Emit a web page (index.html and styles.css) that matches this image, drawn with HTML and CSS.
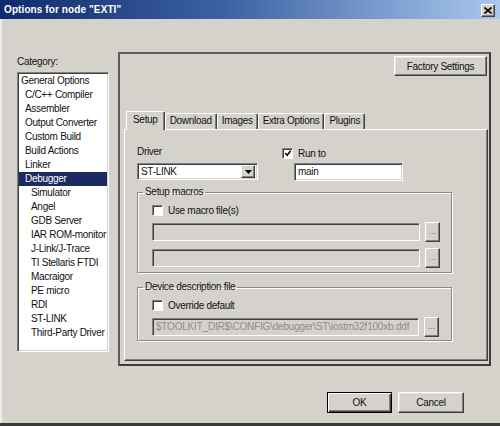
FILE: index.html
```html
<!DOCTYPE html>
<html>
<head>
<meta charset="utf-8">
<link rel="stylesheet" href="styles.css">
</head>
<body>
<div class="window">
  <div class="titlebar">
    <span class="title">Options for node "EXTI"</span>
    <span class="close"><svg width="8" height="7" viewBox="0 0 8 7"><path d="M0.5 0.5 L7.5 6.5 M7.5 0.5 L0.5 6.5" stroke="#000" stroke-width="1.6"/></svg></span>
  </div>
  <div class="body">
    <div class="category">
      <div class="cat-label">Category:</div>
      <ul class="cat-list">
        <li class="lv0">General Options</li>
        <li class="lv1">C/C++ Compiler</li>
        <li class="lv1">Assembler</li>
        <li class="lv1">Output Converter</li>
        <li class="lv1">Custom Build</li>
        <li class="lv1">Build Actions</li>
        <li class="lv1">Linker</li>
        <li class="lv1 sel">Debugger</li>
        <li class="lv2">Simulator</li>
        <li class="lv2">Angel</li>
        <li class="lv2">GDB Server</li>
        <li class="lv2">IAR ROM-monitor</li>
        <li class="lv2">J-Link/J-Trace</li>
        <li class="lv2">TI Stellaris FTDI</li>
        <li class="lv2">Macraigor</li>
        <li class="lv2">PE micro</li>
        <li class="lv2">RDI</li>
        <li class="lv2">ST-LINK</li>
        <li class="lv2">Third-Party Driver</li>
      </ul>
    </div>
    <div class="options">
      <div class="factory-row"><div class="btn factory">Factory Settings</div></div>
      <div class="tabs">
        <span class="tab active">Setup</span>
        <span class="tab">Download</span>
        <span class="tab">Images</span>
        <span class="tab">Extra Options</span>
        <span class="tab">Plugins</span>
      </div>
      <div class="tab-page">
        <div class="row1">
          <div class="driver-col">
            <div class="lbl">Driver</div>
            <div class="select"><span class="sel-text">ST-LINK</span><span class="dd"><svg width="7" height="4" viewBox="0 0 7 4"><path d="M0 0 H7 L3.5 4 Z" fill="#000"/></svg></span></div>
          </div>
          <div class="run-col">
            <div class="check"><span class="box"><svg width="9" height="9" viewBox="0 0 9 9"><path d="M1.5 4 L3.5 6.5 L7.5 1.5" stroke="#000" stroke-width="1.7" fill="none"/></svg></span><span>Run to</span></div>
            <div class="input">main</div>
          </div>
        </div>
        <fieldset class="group macros">
          <legend>Setup macros</legend>
          <div class="group-inner">
            <div class="check"><span class="box"></span><span>Use macro file(s)</span></div>
            <div class="file-row"><div class="field disabled"></div><span class="browse">...</span></div>
            <div class="file-row second"><div class="field disabled"></div><span class="browse">...</span></div>
          </div>
        </fieldset>
        <fieldset class="group device">
          <legend>Device description file</legend>
          <div class="group-inner">
            <div class="check"><span class="box"></span><span>Override default</span></div>
            <div class="file-row"><div class="field disabled path">$TOOLKIT_DIR$\CONFIG\debugger\ST\iostm32f100xb.ddf</div><span class="browse">...</span></div>
          </div>
        </fieldset>
      </div>
    </div>
  </div>
  <div class="footer">
    <div class="btn default">OK</div>
    <div class="btn">Cancel</div>
  </div>
</div>
</body>
</html>
```

FILE: styles.css
```css
* { box-sizing: border-box; }
html, body { margin: 0; padding: 0; }
body {
  font-family: "Liberation Sans", Arial, sans-serif;
  font-size: 10px;
  letter-spacing: -0.3px;
  color: #111;
  background: #d5d2cc;
}
.window {
  width: 500px;
  height: 426px;
  background: #d5d2cc;
  display: flex;
  flex-direction: column;
  border-bottom: 3px solid #3a3a3a;
  box-shadow: inset 2px 0 #eeece8;
}
.titlebar {
  height: 19px;
  flex: none;
  display: flex;
  align-items: center;
  justify-content: space-between;
  padding: 0 5px 0 4px;
  background: linear-gradient(90deg, #0f2a6c 0%, #3d62a4 45%, #a9c8ee 100%);
}
.title {
  color: #fff;
  font-weight: bold;
  font-size: 10px;
  letter-spacing: 0.1px;
}
.close {
  width: 14px;
  height: 13px;
  margin-top: 2px;
  background: #d5d2cc;
  border: 1px solid;
  border-color: #fff #404040 #404040 #fff;
  box-shadow: inset -1px -1px #808080;
  display: flex;
  align-items: center;
  justify-content: center;
}
.close svg { display: block; }
.body {
  display: grid;
  grid-template-columns: 92px 373px;
  column-gap: 9px;
  padding: 33px 0 0 17px;
  align-items: start;
}
.cat-label {
  margin-top: 4px;
  line-height: 12px;
  height: 12px;
}
.cat-list {
  list-style: none;
  margin: 4px 0 0 0;
  padding: 1px 1px 0 1px;
  height: 280px;
  background: #fff;
  border: 1px solid;
  border-color: #808080 #fff #fff #808080;
  box-shadow: inset 1px 1px #404040, inset -1px -1px #d5d2cc;
}
.cat-list li {
  height: 14px;
  line-height: 14px;
  white-space: nowrap;
}
.cat-list .lv0 { padding-left: 2px; }
.cat-list .lv1 { padding-left: 6px; }
.cat-list .lv2 { padding-left: 12px; }
.cat-list .sel { background: #1b2a62; color: #fff; }

.options {
  height: 314px;
  border: 2px solid;
  border-color: #5c5c5c #3c3c3c #3c3c3c #5c5c5c;
  padding: 2px 1px 0 4px;
  display: flex;
  flex-direction: column;
}
.factory-row {
  display: flex;
  justify-content: flex-end;
  padding-right: 1px;
}
.btn {
  height: 20px;
  display: flex;
  align-items: center;
  justify-content: center;
  border: 1px solid;
  border-color: #fff #404040 #404040 #fff;
  box-shadow: inset -1px -1px #808080, inset 1px 1px #e4e2dd;
  background: #d5d2cc;
}
.factory { width: 93px; }
.tabs {
  margin-top: 35px;
  height: 18px;
  display: flex;
  align-items: flex-end;
  padding-left: 2px;
  position: relative;
  z-index: 1;
}
.tab {
  height: 16px;
  line-height: 14px;
  padding: 0 4px;
  border: 1px solid;
  border-bottom: none;
  border-color: #fff #404040 #404040 #fff;
  box-shadow: inset -1px 0 #808080;
  border-radius: 2px 2px 0 0;
  background: #d5d2cc;
}
.tab.active {
  height: 19px;
  margin-bottom: -1px;
  padding: 1px 6px 0 6px;
}
.tab-page {
  width: 364px;
  height: 232px;
  border: 1px solid;
  border-color: #fff #404040 #404040 #fff;
  box-shadow: inset -1px -1px #808080;
  padding: 16px 0 0 12px;
}
.row1 {
  display: flex;
  height: 35px;
}
.driver-col { width: 121px; }
.lbl { line-height: 12px; height: 12px; }
.select {
  margin-top: 5px;
  height: 17px;
  background: #fff;
  border: 1px solid;
  border-color: #808080 #fff #fff #808080;
  box-shadow: inset 1px 1px #404040, inset -1px -1px #d5d2cc;
  display: flex;
  align-items: center;
  justify-content: space-between;
  padding: 0 2px 0 3px;
}
.dd {
  width: 14px;
  height: 13px;
  border: 1px solid;
  border-color: #fff #404040 #404040 #fff;
  box-shadow: inset -1px -1px #808080;
  background: #d5d2cc;
  display: flex;
  align-items: center;
  justify-content: center;
}
.dd svg { display: block; }
.run-col { margin-left: 24px; }
.check {
  display: flex;
  align-items: center;
  height: 13px;
  margin-top: 1px;
  gap: 5px;
}
.box {
  width: 11px;
  height: 11px;
  flex: none;
  background: #fff;
  border: 1px solid;
  border-color: #808080 #fff #fff #808080;
  box-shadow: inset 1px 1px #404040;
  display: flex;
  align-items: center;
  justify-content: center;
}
.box svg { display: block; margin: 0 0 0 1px; }
.input {
  margin: 3px 0 0 12px;
  width: 109px;
  height: 18px;
  background: #fff;
  border: 1px solid;
  border-color: #808080 #fff #fff #808080;
  box-shadow: inset 1px 1px #404040, inset -1px -1px #d5d2cc;
  padding: 0 3px;
  line-height: 16px;
}
fieldset.group {
  margin: 5px 0 0 0;
  padding: 0 0 4px 5px;
  width: 315px;
  border: 1px solid #8c8a86;
  box-shadow: inset 1px 1px #fff, 1px 1px #fff;
  min-inline-size: 0;
}
fieldset.group legend {
  padding: 0 2px;
  line-height: 12px;
}
.group-inner { padding-left: 9px; }
.group-inner .check { margin-top: 6px; height: 12px; }
.file-row {
  display: flex;
  align-items: center;
  gap: 5px;
  margin-top: 6px;
}
.file-row.second { margin-top: 6px; }
.field {
  width: 268px;
  height: 18px;
  border: 1px solid;
  border-color: #808080 #fff #fff #808080;
  box-shadow: inset 1px 1px #404040, inset -1px -1px #d5d2cc;
}
.field.disabled { background: #d5d2cc; }
.path {
  color: #8e8c88;
  padding-left: 3px;
  line-height: 16px;
  white-space: nowrap;
  overflow: hidden;
  letter-spacing: -0.2px;
  width: 267px;
}
.browse {
  width: 15px;
  height: 20px;
  border: 1px solid;
  border-color: #fff #404040 #404040 #fff;
  box-shadow: inset -1px -1px #808080;
  color: #7c7a76;
  font-size: 9px;
  line-height: 9px;
  display: flex;
  align-items: flex-end;
  justify-content: center;
  padding-bottom: 5px;
  letter-spacing: 0;
}
fieldset.device { margin-top: 8px; padding-bottom: 3px; }
.footer {
  display: flex;
  justify-content: flex-end;
  gap: 6px;
  padding: 26px 36px 0 0;
}
.footer .btn { width: 66px; height: 21px; }
.footer .btn.default {
  width: 65px;
  border: 1px solid #000;
  box-shadow: inset 1px 1px #fff, inset -1px -1px #404040, inset -2px -2px #808080;
}
```
